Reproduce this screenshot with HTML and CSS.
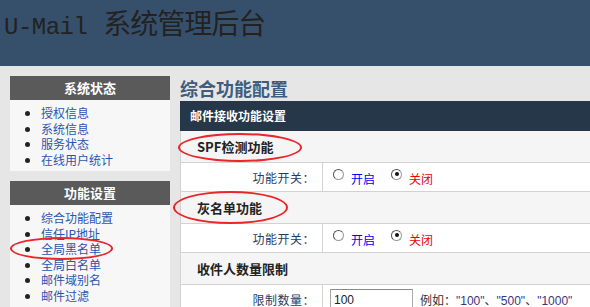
FILE: index.html
```html
<!DOCTYPE html>
<html lang="zh-CN">
  <head>
    <meta charset="UTF-8" />
    <title>U-Mail 系统管理后台</title>
    <link rel="stylesheet" href="styles.css">
  </head>
  <body>
    <div id="page">
      <!-- Header -->
      <div class="header">
        <span class="brand">U-Mail</span> 系统管理后台
      </div>

      <div class="layout">
        <!-- Sidebar -->
        <div class="sidebar">
          <div class="side-box">
            <div class="side-title">系统状态</div>
            <ul class="side-list">
              <li><a href="#">授权信息</a></li>
              <li><a href="#">系统信息</a></li>
              <li><a href="#">服务状态</a></li>
              <li><a href="#">在线用户统计</a></li>
            </ul>
          </div>
          <div class="side-box">
            <div class="side-title">功能设置</div>
            <ul class="side-list">
              <li><a href="#">综合功能配置</a></li>
              <li><a href="#">信任IP地址</a></li>
              <li><a href="#">全局黑名单</a></li>
              <li><a href="#">全局白名单</a></li>
              <li><a href="#">邮件域别名</a></li>
              <li><a href="#">邮件过滤</a></li>
            </ul>
          </div>
        </div>

        <!-- Main content -->
        <div class="main">
          <h1 class="page-title">综合功能配置</h1>
          <div class="panel">
            <div class="panel-head">邮件接收功能设置</div>

            <div class="section">SPF检测功能</div>
            <div class="row">
              <div class="label">功能开关：</div>
              <div class="field">
                <span class="radio"></span><span class="on">开启</span>
                <span class="radio checked"></span><span class="off">关闭</span>
              </div>
            </div>

            <div class="section">灰名单功能</div>
            <div class="row">
              <div class="label">功能开关：</div>
              <div class="field">
                <span class="radio"></span><span class="on">开启</span>
                <span class="radio checked"></span><span class="off">关闭</span>
              </div>
            </div>

            <div class="section">收件人数量限制</div>
            <div class="row">
              <div class="label">限制数量：</div>
              <div class="field">
                <input class="num-input" type="text" value="100">
                <span class="hint">例如：<span class="val">"100"</span>、<span class="val">"500"</span>、<span class="val">"1000"</span></span>
              </div>
            </div>
          </div>
        </div>
      </div>

      <!-- Red annotation circles -->
      <div class="mark mark-spf"></div>
      <div class="mark mark-grey"></div>
      <div class="mark mark-black"></div>
    </div>
  </body>
</html>
```

FILE: styles.css
```css
/* General Styling */
body {
  margin: 0;
  padding: 0;
  background: #e6e6e6;
  font-family: "Noto Sans CJK SC", "DejaVu Sans", sans-serif;
  font-size: 12px;
  color: #222;
}

#page {
  position: relative;
  width: 590px;
  height: 307px;
  overflow: hidden;
}

/* Header */
.header {
  height: 66px;
  background: #36506b;
  color: #222;
  font-family: "Liberation Mono", "Noto Sans CJK SC", monospace;
  font-size: 28px;
  line-height: 54px;
  padding-left: 4px;
  letter-spacing: -1px;
  box-sizing: border-box;
}

.brand {
  font-size: 24px;
  letter-spacing: -0.5px;
}

.layout {
  display: flex;
  padding-top: 10px;
}

/* Sidebar */
.sidebar {
  width: 160px;
  margin-left: 10px;
  margin-right: 10px;
  flex-shrink: 0;
}

.side-box {
  background: #f7f7f7;
  margin-bottom: 10px;
}

.side-title {
  height: 24px;
  line-height: 24px;
  background: #5a5a5a;
  color: #fff;
  font-weight: bold;
  font-size: 13px;
  text-align: center;
}

.side-list {
  margin: 0;
  padding: 5px 0 4px 31px;
  list-style: disc;
}

.side-list li {
  font-size: 12px;
  line-height: 15.5px;
  color: #222;
}

.side-list a {
  color: #2b55b0;
  text-decoration: none;
}

/* Main */
.main {
  flex: 1;
}

.page-title {
  margin: 0;
  height: 25px;
  font-size: 18px;
  line-height: 24px;
  font-weight: bold;
  color: #3f5d7d;
}

.panel {
  background: #fff;
  border-left: 1px solid #d2d2d2;
}

.panel-head {
  height: 30px;
  line-height: 30px;
  background: #253749;
  color: #fff;
  font-weight: bold;
  font-size: 12px;
  padding-left: 10px;
  margin-left: -1px;
}

.section {
  height: 31px;
  line-height: 31px;
  background: #f5f5f5;
  font-weight: bold;
  font-size: 13px;
  padding-left: 16px;
  border-bottom: 1px solid #d2d2d2;
}

.row {
  display: flex;
  height: 28px;
  border-bottom: 1px solid #d2d2d2;
  background: #fff;
}

.label {
  width: 134px;
  padding-right: 7px;
  text-align: right;
  line-height: 30px;
  color: #1f3d63;
  font-size: 12px;
  letter-spacing: 0.5px;
  border-right: 1px solid #d2d2d2;
}

.field {
  display: flex;
  align-items: center;
  padding-left: 10px;
  font-size: 12px;
}

/* Radio look-alikes */
.radio {
  width: 9px;
  height: 9px;
  border: 1px solid #9a9a9a;
  border-top-color: #555;
  border-left-color: #555;
  border-radius: 50%;
  background: #fff;
  margin-right: 7px;
  margin-top: -6px;
  position: relative;
}

.radio.checked::after {
  content: "";
  position: absolute;
  left: 2.5px;
  top: 2.5px;
  width: 4px;
  height: 4px;
  border-radius: 50%;
  background: #111;
}

.on {
  color: #0000ff;
  margin-right: 16px;
  margin-top: 2px;
}

.off {
  color: #ee0000;
  margin-top: 2px;
}

.num-input {
  width: 78px;
  height: 20px;
  border: 1px solid #a9a9a9;
  border-top-color: #8a8a8a;
  padding: 0 0 0 3px;
  margin: 4px 0 0 -3px;
  font-family: "Liberation Sans", sans-serif;
  font-size: 12px;
  color: #222;
  align-self: flex-start;
}

.hint {
  margin-left: 7px;
  color: #333;
}

.val {
  color: #3a3580;
  font-family: "Liberation Sans", sans-serif;
}

/* Red annotation circles */
.mark {
  position: absolute;
  border: 2px solid #e9262b;
  border-radius: 50%;
  box-sizing: border-box;
}

.mark-spf {
  left: 178px;
  top: 133px;
  width: 124px;
  height: 29px;
}

.mark-grey {
  left: 173px;
  top: 191px;
  width: 115px;
  height: 33px;
}

.mark-black {
  left: 10px;
  top: 237px;
  width: 103px;
  height: 23px;
}
```
